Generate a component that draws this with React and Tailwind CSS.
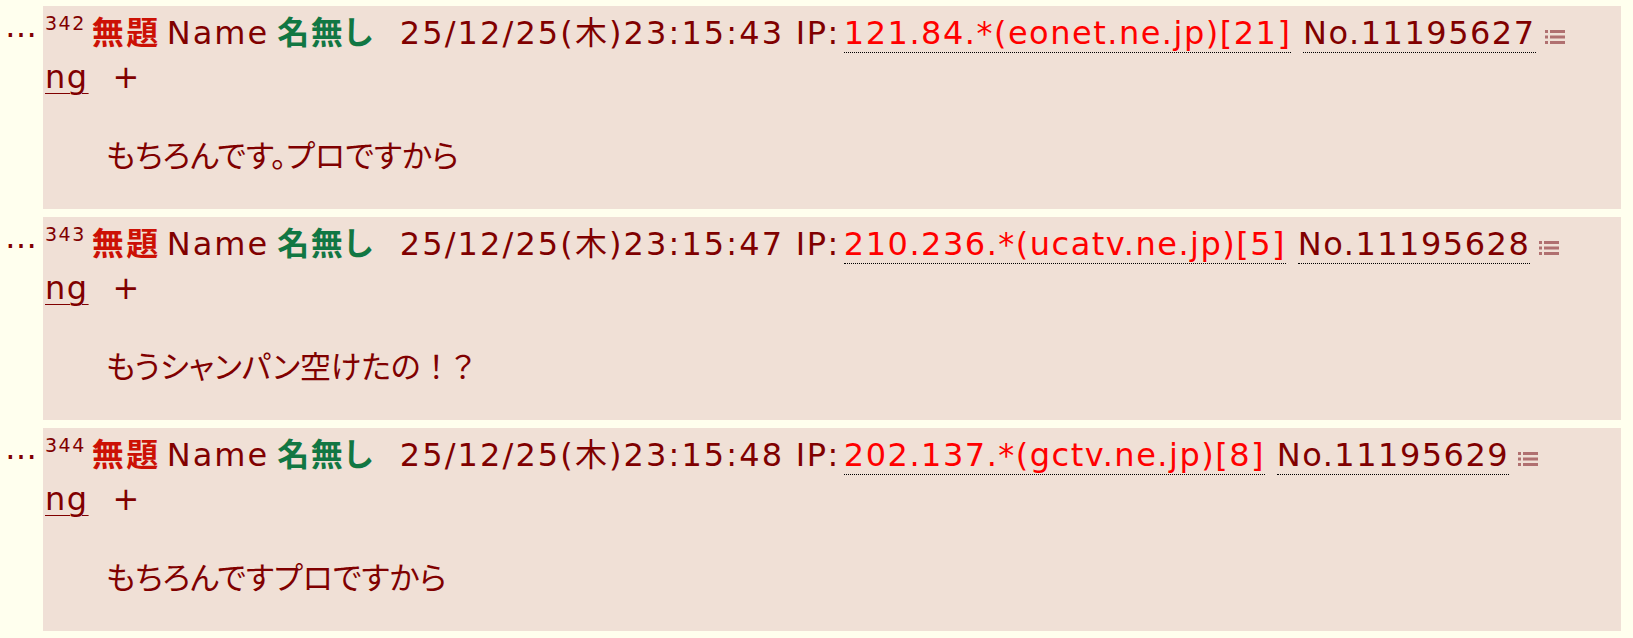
const posts = [
  {
    no: 342,
    time: '25/12/25(木)23:15:43',
    ip: '121.84.*(eonet.ne.jp)[21]',
    id: 'No.11195627',
    body: 'もちろんです。プロですから',
  },
  {
    no: 343,
    time: '25/12/25(木)23:15:47',
    ip: '210.236.*(ucatv.ne.jp)[5]',
    id: 'No.11195628',
    body: 'もうシャンパン空けたの',
    tail: '！',
    end: '？',
  },
  {
    no: 344,
    time: '25/12/25(木)23:15:48',
    ip: '202.137.*(gctv.ne.jp)[8]',
    id: 'No.11195629',
    body: 'もちろんですプロですから',
  },
];

function MenuIcon() {
  return (
    <svg width="20" height="16" viewBox="0 0 20 16" className="inline-block ml-[9px] align-[-1px]">
      <g fill="#b07070">
        <rect x="0" y="1" width="3" height="3" />
        <rect x="5" y="1" width="15" height="3" />
        <rect x="0" y="6.5" width="3" height="3" />
        <rect x="5" y="6.5" width="15" height="3" />
        <rect x="0" y="12" width="3" height="3" />
        <rect x="5" y="12" width="15" height="3" />
      </g>
    </svg>
  );
}

function Post({ post }) {
  return (
    <div className="flex">
      <div className="w-[43px] pl-[5px] leading-[40px] text-[#800000]">…</div>
      <div className="w-[1578px] h-[203px] bg-[#f0e0d6] pl-[2px] pt-[5px]">
        <div className="leading-[44px] whitespace-nowrap tracking-[1.5px]">
          <span className="text-[19px] leading-none align-[14px]">{post.no}</span>
          <span className="ml-[6px] font-bold text-[#cc1105] tracking-[2.5px]">無題</span>
          <span className="ml-[6px] tracking-[2px]">Name</span>
          <span className="ml-[8px] font-bold text-[#117743]">名無し</span>
          <span className="ml-[26px] tracking-[2.1px]">{post.time}</span>{' '}
          IP:<span className="ml-[4px] text-[#ff0000] border-b border-dotted border-black">{post.ip}</span>{' '}
          <span className="border-b border-dotted border-black">{post.id}</span>
          <MenuIcon />
        </div>
        <div className="leading-[44px] tracking-[1.5px]">
          <span className="underline decoration-1 underline-offset-[5px]">ng</span>
          <span className="ml-[24px]">+</span>
        </div>
        <div className="ml-[61px] mt-[35px] leading-[44px] text-[31px]">
          {post.body}
          {post.tail && <span className="[font-feature-settings:normal]">{post.tail}</span>}
          {post.end}
        </div>
      </div>
    </div>
  );
}

export default function App() {
  return (
    <div
      className="min-h-screen bg-[#ffffee] pt-[6px] text-[32px] text-[#800000] [font-feature-settings:'palt'] flex flex-col gap-[8px]"
      style={{ fontFamily: '"DejaVu Sans", "Noto Sans CJK JP", sans-serif' }}
    >
      {posts.map(p => (
        <Post key={p.no} post={p} />
      ))}
    </div>
  );
}
